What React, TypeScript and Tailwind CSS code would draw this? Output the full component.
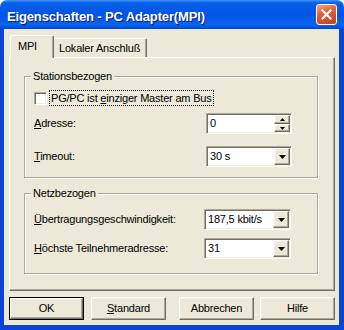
import React from 'react';

const raised =
  'border border-t-white border-l-white border-r-[#716f64] border-b-[#716f64] shadow-[inset_-1px_-1px_0_#aca899,inset_1px_1px_0_#f1efe2] bg-[#ece9d8]';
const sunken =
  'border border-t-[#aca899] border-l-[#aca899] border-r-white border-b-white shadow-[inset_1px_1px_0_#716f64,inset_-1px_-1px_0_#f1efe2] bg-white';

const DownArrow = () => (
  <svg width="7" height="4" viewBox="0 0 7 4">
    <polygon points="0,0 7,0 3.5,4" fill="#000" />
  </svg>
);

const SmallArrow = ({ up }: { up?: boolean }) => (
  <svg width="5" height="3" viewBox="0 0 5 3">
    <polygon points={up ? '0,3 5,3 2.5,0' : '0,0 5,0 2.5,3'} fill="#000" />
  </svg>
);

const Combo: React.FC<{ value: string; width: string }> = ({ value, width }) => (
  <div className={`flex h-[21px] ${width} p-px ${sunken}`}>
    <div className="flex-1 pl-[2px] leading-[17px]">{value}</div>
    <div className={`flex h-[17px] w-[16px] items-center justify-center ${raised}`}>
      <DownArrow />
    </div>
  </div>
);

const Spin: React.FC<{ value: string }> = ({ value }) => (
  <div className={`flex h-[21px] w-[86px] p-px ${sunken}`}>
    <div className="flex-1 pl-[2px] leading-[17px]">{value}</div>
    <div className="flex w-[16px] flex-col">
      <div className={`flex h-[9px] items-center justify-center ${raised}`}>
        <SmallArrow up />
      </div>
      <div className={`flex h-[8px] items-center justify-center ${raised}`}>
        <SmallArrow />
      </div>
    </div>
  </div>
);

const Group: React.FC<{ title: string; className: string; children: React.ReactNode }> = ({ title, className, children }) => (
  <div className={`relative w-[294px] border border-[#aca899] shadow-[1px_1px_0_#fff,inset_1px_1px_0_#fff] ${className}`}>
    <span className="absolute -top-[7px] left-[6px] bg-[#ece9d8] px-[2px]">{title}</span>
    {children}
  </div>
);

const Button: React.FC<{ children: React.ReactNode; className?: string; primary?: boolean }> = ({ children, className = '', primary }) =>
  primary ? (
    <div className={`h-[23px] w-[75px] border border-black ${className}`}>
      <div className={`flex h-full items-center justify-center ${raised}`}>{children}</div>
    </div>
  ) : (
    <div className={`flex h-[23px] w-[75px] items-center justify-center ${raised} ${className}`}>{children}</div>
  );

export default function App() {
  return (
    <div className="h-[330px] w-[344px] bg-white font-['Liberation_Sans',Arial,sans-serif] text-[11px] leading-[13px] tracking-[-0.2px] text-black">
      <div className="flex h-[29px] items-center justify-between rounded-t-[7px] bg-[linear-gradient(180deg,#3d95ff_0%,#0a5fe8_10%,#0055e5_50%,#0a62f0_85%,#0048d4_100%)] pl-[7px] pr-[7px]">
        <span className="pt-[3px] text-[13px] leading-[15px] font-bold tracking-[-0.15px] text-white [text-shadow:1px_1px_0_#0a1883]">
          Eigenschaften - PC Adapter(MPI)
        </span>
        <div className="flex h-[21px] w-[21px] items-center justify-center rounded-[3px] border border-white bg-[linear-gradient(160deg,#f0a58a_0%,#e0603a_40%,#c8401e_100%)]">
          <svg width="11" height="11" viewBox="0 0 11 11">
            <path d="M1.5 1.5 L9.5 9.5 M9.5 1.5 L1.5 9.5" stroke="#fff" strokeWidth="2.2" strokeLinecap="square" />
          </svg>
        </div>
      </div>

      <div className="h-[301px] border-b-[5px] border-l-4 border-r-[5px] border-[#0a45d8] bg-[#ece9d8] pt-[6px]">
        {/* tabs */}
        <div className="flex h-[22px] items-end pl-[6px]">
          <div className="relative z-10 -mb-px h-[23px] w-[44px] rounded-t-[2px] border-l border-t border-r border-l-white border-t-white border-r-[#716f64] bg-[#ece9d8] pl-[7px] pt-[4px] shadow-[inset_-1px_0_0_#aca899]">
            MPI
          </div>
          <div className="h-[19px] w-[93px] rounded-tr-[2px] border-t border-r border-t-white border-r-[#716f64] pl-[5px] pt-[3px] shadow-[inset_-1px_0_0_#aca899]">
            Lokaler Anschluß
          </div>
        </div>

        {/* panel */}
        <div className="ml-[5px] h-[234px] w-[326px] border border-t-white border-l-white border-r-[#716f64] border-b-[#716f64] pl-[14px] pt-[18px] shadow-[inset_-1px_-1px_0_#aca899]">
          <Group title="Stationsbezogen" className="pb-[10px] pl-[9px] pt-[13px]">
            <div className="flex h-[16px] items-center">
              <div className={`h-[13px] w-[13px] ${sunken}`} />
              <span className="ml-[2px] h-[16px] border border-dotted border-black px-px leading-[14px]">
                PG/PC ist <u className="underline-offset-[1px]">e</u>inziger Master am Bus
              </span>
            </div>
            <div className="mt-[7px] flex h-[21px] items-center">
              <span className="w-[172px]">
                <u className="underline-offset-[1px]">A</u>dresse:
              </span>
              <Spin value="0" />
            </div>
            <div className="mt-[12px] flex h-[21px] items-center">
              <span className="w-[172px]">
                <u className="underline-offset-[1px]">T</u>imeout:
              </span>
              <Combo value="30 s" width="w-[86px]" />
            </div>
          </Group>

          <Group title="Netzbezogen" className="mt-[15px] pb-[14px] pl-[9px] pt-[15px]">
            <div className="flex h-[21px] items-center">
              <span className="w-[170px]">
                <u className="underline-offset-[1px]">Ü</u>bertragungsgeschwindigkeit:
              </span>
              <Combo value="187,5 kbit/s" width="w-[87px]" />
            </div>
            <div className="mt-[8px] flex h-[21px] items-center">
              <span className="w-[170px]">
                <u className="underline-offset-[1px]">H</u>öchste Teilnehmeradresse:
              </span>
              <Combo value="31" width="w-[87px]" />
            </div>
          </Group>
        </div>

        {/* buttons */}
        <div className="mt-[6px] flex">
          <Button primary className="ml-[5px]">OK</Button>
          <Button className="ml-[7px]">
            <span>
              <u className="underline-offset-[1px]">S</u>tandard
            </span>
          </Button>
          <Button className="ml-[13px]">Abbrechen</Button>
          <Button className="ml-[6px]">Hilfe</Button>
        </div>
      </div>
    </div>
  );
}
